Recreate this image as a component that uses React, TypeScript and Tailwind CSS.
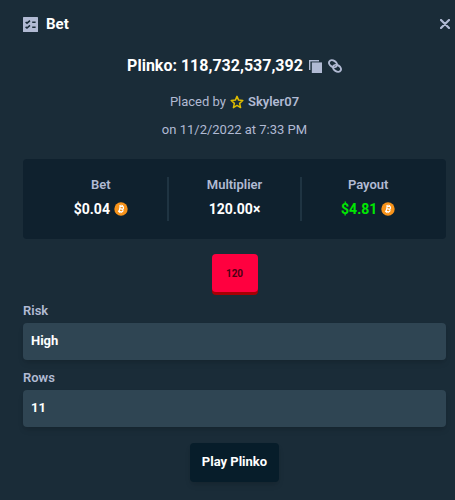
import type { ReactNode } from "react";

function ChecklistIcon() {
  return (
    <svg viewBox="0 0 15 15" className="size-[15px]" aria-hidden="true">
      <rect width="15" height="15" rx="0.5" fill="#b1bad3" />
      <path
        d="M2.6 5l1.4 1.2L7 3.6M2.6 9.8L4 11l3-2.6M9.2 5.2h3.4M9.2 10.2h3.4"
        fill="none"
        stroke="#1a2c38"
        strokeWidth="1.6"
      />
    </svg>
  );
}

function CloseIcon() {
  return (
    <svg viewBox="0 0 10 10" className="size-[10px]" aria-hidden="true">
      <path d="M1 1l8 8M9 1L1 9" stroke="#b1bad3" strokeWidth="2.2" strokeLinecap="round" />
    </svg>
  );
}

function CopyIcon() {
  return (
    <svg viewBox="0 0 13 13" className="size-[13px]" aria-hidden="true">
      <path d="M0.7 10V0.7H10" fill="none" stroke="#b1bad3" strokeWidth="1.4" />
      <rect x="2.8" y="2.4" width="10.2" height="10.6" fill="#b1bad3" />
    </svg>
  );
}

function LinkIcon() {
  return (
    <svg viewBox="0 0 14 14" className="size-[14px]" aria-hidden="true">
      <g fill="none" stroke="#b1bad3" strokeWidth="1.9">
        <ellipse cx="5" cy="4.7" rx="4.3" ry="3.1" transform="rotate(32 5 4.7)" />
        <ellipse cx="9" cy="9.3" rx="4.3" ry="3.1" transform="rotate(32 9 9.3)" />
      </g>
    </svg>
  );
}

function StarIcon() {
  return (
    <svg viewBox="0 0 14 14" className="size-[14px]" aria-hidden="true">
      <path
        d="M7 1.4l1.6 3.7 4.2.4-3.2 2.9 1 4.2L7 10.4l-3.6 2.2 1-4.2L1.2 5.5l4.2-.4z"
        fill="none"
        stroke="#e0bd00"
        strokeWidth="1.5"
        strokeLinejoin="round"
      />
    </svg>
  );
}

function BitcoinIcon() {
  return (
    <svg viewBox="0 0 14 14" className="size-[14px]" aria-hidden="true">
      <circle cx="7" cy="7" r="6.7" fill="#f7931a" />
      <g fill="none" stroke="#fff" strokeWidth="1.2" transform="rotate(12 7 7)">
        <path d="M4.5 4.2h3.4a1.35 1.35 0 0 1 0 2.7H5.7M7.9 6.9a1.4 1.4 0 0 1 0 2.8H4.5M5.7 4.2v5.5" />
        <path d="M6.2 2.8v1.4M7.8 2.8v1.4M6.2 9.7v1.4M7.8 9.7v1.4" strokeWidth="0.9" />
      </g>
    </svg>
  );
}

function Stat({ label, children }: { label: string; children: ReactNode }) {
  return (
    <div className="flex flex-1 flex-col items-center">
      <span className="leading-4 font-semibold text-[#b1bad3]">{label}</span>
      <span className="mt-2 flex items-center gap-1 text-sm leading-4 text-white">{children}</span>
    </div>
  );
}

function Field({ id, label, value }: { id: string; label: string; value: string }) {
  return (
    <div>
      <label htmlFor={id} className="block leading-5 font-semibold text-[#b1bad3]">
        {label}
      </label>
      <input
        id={id}
        readOnly
        value={value}
        className="mt-0.5 block h-[37px] w-full rounded bg-[#2f4553] px-2 pb-0.5 text-white shadow-md outline-none"
      />
    </div>
  );
}

export default function App() {
  return (
    <main className="min-h-screen bg-[#1a2c38] pt-3 pr-[9px] pb-[18px] pl-[23px] font-['Roboto',sans-serif] text-[13px] font-bold">
      <header className="flex h-6 items-center justify-between text-base text-white">
        <h1 className="flex items-center gap-2 text-[15px]">
          <ChecklistIcon />
          Bet
        </h1>
        <button type="button" aria-label="Close" className="-mr-2 p-1">
          <CloseIcon />
        </button>
      </header>

      <section className="mt-[18px] flex flex-col items-center">
        <div className="flex h-6 items-center gap-1.5">
          <h2 className="text-base text-white">Plinko: 118,732,537,392</h2>
          <button type="button" aria-label="Copy bet ID">
            <CopyIcon />
          </button>
          <button type="button" aria-label="Copy link">
            <LinkIcon />
          </button>
        </div>
        <p className="mt-3 flex items-center gap-1 leading-6 font-normal text-[#b1bad3]">
          Placed by
          <StarIcon />
          <button type="button" className="font-semibold">
            Skyler07
          </button>
        </p>
        <p className="mt-1 leading-6 font-normal text-[#b1bad3]">on 11/2/2022 at 7:33 PM</p>
      </section>

      <section className="mt-[17px] rounded bg-[#0f212e] px-3 py-[18px]">
        <div className="flex h-11 divide-x-2 divide-[#1f3442]">
          <Stat label="Bet">
            $0.04
            <BitcoinIcon />
          </Stat>
          <Stat label="Multiplier">120.00×</Stat>
          <Stat label="Payout">
            <span className="text-[#00e701]">$4.81</span>
            <BitcoinIcon />
          </Stat>
        </div>
      </section>

      <div className="mx-auto mt-[15px] flex h-[38px] w-[46px] items-center justify-center rounded bg-[#ff003f] text-[10px] text-[#4d0013] shadow-[0_3px_0_#a60004]">
        120
      </div>

      <form className="mt-[9px] flex flex-col gap-2">
        <Field id="risk" label="Risk" value="High" />
        <Field id="rows" label="Rows" value="11" />
        <button
          type="button"
          className="mt-2 h-[39px] self-center rounded bg-[#071d2a] px-3 pb-0.5 text-white shadow-md"
        >
          Play Plinko
        </button>
      </form>
    </main>
  );
}
